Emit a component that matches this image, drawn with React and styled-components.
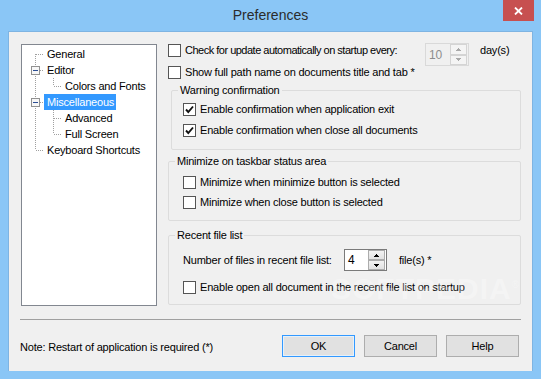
import styled, { createGlobalStyle } from 'styled-components';

const GlobalStyle = createGlobalStyle`
  html, body {
    margin: 0;
    padding: 0;
  }
  body {
    background: #8ac6f6;
    font-family: "Liberation Sans", Arial, sans-serif;
    font-size: 11px;
    letter-spacing: -0.2px;
    color: #000;
  }
  * {
    box-sizing: border-box;
  }
`;

const tree = [
  { label: 'General' },
  { label: 'Editor', children: [{ label: 'Colors and Fonts' }] },
  {
    label: 'Miscellaneous',
    selected: true,
    children: [{ label: 'Advanced' }, { label: 'Full Screen' }],
  },
  { label: 'Keyboard Shortcuts' },
];

function flatten(nodes, level = 0, guides = []) {
  const rows = [];
  nodes.forEach((node, i) => {
    const last = i === nodes.length - 1;
    rows.push({
      label: node.label,
      selected: node.selected,
      level,
      guides,
      first: level === 0 && i === 0,
      last,
      hasChildren: !!node.children,
    });
    if (node.children) {
      rows.push(...flatten(node.children, level + 1, [...guides, !last]));
    }
  });
  return rows;
}

function Guide({ on }) {
  return (
    <svg width="18" height="16" shapeRendering="crispEdges">
      {on && (
        <line x1="9.5" y1="0" x2="9.5" y2="16" stroke="#a0a0a0" strokeDasharray="1 1" />
      )}
    </svg>
  );
}

function Connector({ first, last, hasChildren }) {
  const top = first ? 8 : 0;
  const bottom = last ? 8 : 16;
  return (
    <svg width="18" height="16" shapeRendering="crispEdges">
      <line x1="9.5" y1={top} x2="9.5" y2={bottom} stroke="#a0a0a0" strokeDasharray="1 1" />
      <line x1="10" y1="8.5" x2="18" y2="8.5" stroke="#a0a0a0" strokeDasharray="1 1" />
      {hasChildren && (
        <>
          <rect x="5.5" y="4.5" width="8" height="8" fill="#f7f7f7" stroke="#919191" />
          <line x1="7" y1="8.5" x2="12" y2="8.5" stroke="#2c4e94" />
        </>
      )}
    </svg>
  );
}

function Check({ checked }) {
  return (
    <CheckBox>
      {checked && (
        <svg width="11" height="11" viewBox="0 0 11 11">
          <path d="M2 5.5 L4.3 8 L9 2.5" fill="none" stroke="#111" strokeWidth="1.9" />
        </svg>
      )}
    </CheckBox>
  );
}

function Arrow({ up, color }) {
  return (
    <svg width="5" height="3" viewBox="0 0 5 3" shapeRendering="crispEdges">
      <path d={up ? 'M2.5 0 L5 3 L0 3 Z' : 'M0 0 L5 0 L2.5 3 Z'} fill={color} />
    </svg>
  );
}

function Spinner({ value, disabled, width, height }) {
  const arrow = disabled ? '#a8a8a8' : '#000';
  return (
    <SpinBox $w={width} $h={height} $disabled={disabled}>
      <SpinValue $disabled={disabled}>{value}</SpinValue>
      <SpinButtons>
        <SpinButton $disabled={disabled}>
          <Arrow up color={arrow} />
        </SpinButton>
        <SpinButton $disabled={disabled}>
          <Arrow color={arrow} />
        </SpinButton>
      </SpinButtons>
    </SpinBox>
  );
}

function Option({ checked, children }) {
  return (
    <OptionRow>
      <Check checked={checked} />
      <OptionText>{children}</OptionText>
    </OptionRow>
  );
}

export default function App() {
  const rows = flatten(tree);

  return (
    <>
      <GlobalStyle />
      <Window>
        <TitleBar>
          <span />
          <Title>Preferences</Title>
          <CloseButton>
            <svg width="9" height="8" viewBox="0 0 9 8">
              <path d="M1 0.5 L8 7.5 M8 0.5 L1 7.5" stroke="#fff" strokeWidth="1.8" />
            </svg>
          </CloseButton>
        </TitleBar>
        <Client>
          <Main>
            <TreePanel>
              {rows.map((row) => (
                <TreeRow key={row.label}>
                  {row.guides.map((on, i) => (
                    <Guide key={i} on={on} />
                  ))}
                  <Connector first={row.first} last={row.last} hasChildren={row.hasChildren} />
                  <TreeLabel $selected={row.selected}>{row.label}</TreeLabel>
                </TreeRow>
              ))}
            </TreePanel>

            <Options>
              <TopRow>
                <Check />
                <OptionText $width={240} $tight>
                  Check for update automatically on startup every:
                </OptionText>
                <Spinner value="10" disabled width={44} height={23} />
                <Unit>day(s)</Unit>
              </TopRow>
              <Option>Show full path name on documents title and tab *</Option>

              <Group $indent={3} $gap={5}>
                <Legend>Warning confirmation</Legend>
                <GroupBody $top={6} $bottom={12} $gap={8} $left={11}>
                  <Option checked>Enable confirmation when application exit</Option>
                  <Option checked>Enable confirmation when close all documents</Option>
                </GroupBody>
              </Group>

              <Group $gap={5}>
                <Legend>Minimize on taskbar status area</Legend>
                <GroupBody $top={8} $bottom={11} $gap={7} $left={14}>
                  <Option>Minimize when minimize button is selected</Option>
                  <Option>Minimize when close button is selected</Option>
                </GroupBody>
              </Group>

              <Group $gap={8}>
                <Legend>Recent file list</Legend>
                <GroupBody $top={7} $bottom={10} $gap={10} $left={14}>
                  <CountRow>
                    <OptionText $width={161}>Number of files in recent file list:</OptionText>
                    <Spinner value="4" width={43} height={22} />
                    <Unit>file(s) *</Unit>
                  </CountRow>
                  <Option>Enable open all document in the recent file list on startup</Option>
                </GroupBody>
              </Group>
              <Watermark>SOFTPEDIA<sup>®</sup></Watermark>
            </Options>
          </Main>

          <Separator />

          <Footer>
            <Note>Note: Restart of application is required (*)</Note>
            <Buttons>
              <DialogButton $default>OK</DialogButton>
              <DialogButton>Cancel</DialogButton>
              <DialogButton>Help</DialogButton>
            </Buttons>
          </Footer>
        </Client>
      </Window>
    </>
  );
}

const Window = styled.div`
  width: 541px;
  height: 379px;
  background: #8ac6f6;
  display: flex;
  flex-direction: column;
`;

const TitleBar = styled.div`
  height: 31px;
  display: grid;
  grid-template-columns: 1fr auto 1fr;
  align-items: start;
`;

const Title = styled.div`
  font-size: 14px;
  letter-spacing: 0;
  line-height: 31px;
  color: #2b2b2b;
`;

const CloseButton = styled.div`
  justify-self: end;
  width: 31px;
  height: 21px;
  margin-right: 7px;
  background: #c75050;
  display: flex;
  align-items: center;
  justify-content: center;
`;

const Client = styled.div`
  width: 525px;
  height: 340px;
  margin-left: 8px;
  background: #f0f0f0;
  border: 1px solid #7eb4e2;
  border-bottom: none;
  padding: 0 11px;
  display: flex;
  flex-direction: column;
`;

const Main = styled.div`
  display: flex;
  align-items: flex-start;
  gap: 11px;
  margin-top: 11px;
`;

const TreePanel = styled.div`
  width: 136px;
  height: 262px;
  margin-top: 1px;
  margin-left: 1px;
  background: #fff;
  border: 1px solid #828790;
  padding: 1px 0 0 4px;
`;

const TreeRow = styled.div`
  display: flex;
  align-items: center;
  height: 16px;

  svg {
    flex: none;
  }
`;

const TreeLabel = styled.span`
  line-height: 16px;
  padding: 0 2px 0 3px;
  white-space: nowrap;
  background: ${(p) => (p.$selected ? '#3399ff' : 'transparent')};
  color: ${(p) => (p.$selected ? '#fff' : '#000')};
`;

const Options = styled.div`
  position: relative;
  width: 353px;
  display: flex;
  flex-direction: column;
`;

const TopRow = styled.div`
  display: flex;
  align-items: flex-start;
  height: 23px;

  & > span:first-child {
    margin-top: 1px;
  }
`;

const OptionRow = styled.div`
  display: flex;
  align-items: center;
  height: 13px;
`;

const CheckBox = styled.span`
  flex: none;
  width: 13px;
  height: 13px;
  border: 1px solid #555;
  background: #fff;
  display: flex;
  align-items: center;
  justify-content: center;
  margin-right: 4px;
`;

const OptionText = styled.span`
  flex: none;
  width: ${(p) => (p.$width ? `${p.$width}px` : 'auto')};
  line-height: 13px;
  margin-top: ${(p) => (p.$tight ? '1px' : '0')};
  letter-spacing: ${(p) => (p.$tight ? '-0.5px' : 'inherit')};
  white-space: nowrap;
`;

const Unit = styled.span`
  margin-left: 11px;
  line-height: 13px;
  margin-top: 1px;
`;

const CountRow = styled.div`
  display: flex;
  align-items: center;
  height: 22px;

  ${Unit} {
    margin-left: 12px;
    margin-top: 0;
  }
`;

const SpinBox = styled.div`
  flex: none;
  display: flex;
  width: ${(p) => p.$w}px;
  height: ${(p) => p.$h}px;
  border: 1px solid ${(p) => (p.$disabled ? '#d9d9d9' : '#7a7a7a')};
  background: ${(p) => (p.$disabled ? '#f0f0f0' : '#fff')};
  padding: 0 1px 0 0;
`;

const SpinValue = styled.span`
  flex: 1;
  display: flex;
  align-items: center;
  padding-left: 3px;
  font-size: 12px;
  color: ${(p) => (p.$disabled ? '#8d8d8d' : '#000')};
`;

const SpinButtons = styled.div`
  width: 17px;
  display: flex;
  flex-direction: column;
`;

const SpinButton = styled.div`
  flex: 1;
  display: flex;
  align-items: center;
  justify-content: center;
  border: 1px solid ${(p) => (p.$disabled ? '#d4d4d4' : '#acacac')};
  background: ${(p) => (p.$disabled ? '#f4f4f4' : 'linear-gradient(#f2f2f2, #e2e2e2)')};
`;

const Group = styled.fieldset`
  margin: ${(p) => p.$gap}px 0 0 ${(p) => p.$indent || 0}px;
  padding: 0;
  border: 1px solid #dcdcdc;
  border-radius: 2px;
  min-width: 0;
`;

const Legend = styled.legend`
  margin-left: 6px;
  padding: 0 2px;
  line-height: 13px;
`;

const GroupBody = styled.div`
  display: flex;
  flex-direction: column;
  gap: ${(p) => p.$gap}px;
  padding: ${(p) => p.$top}px 0 ${(p) => p.$bottom}px ${(p) => p.$left}px;
`;

const Watermark = styled.div`
  position: absolute;
  left: 163px;
  top: 229px;
  font-size: 30px;
  font-weight: bold;
  letter-spacing: 1px;
  color: rgba(255, 255, 255, 0.3);
  pointer-events: none;

  sup {
    font-size: 10px;
    font-weight: normal;
  }
`;

const Separator = styled.div`
  height: 1px;
  background: #a0a0a0;
  margin-top: 13px;
`;

const Footer = styled.div`
  display: flex;
  align-items: center;
  justify-content: space-between;
  margin-top: 15px;
  padding-right: 2px;
`;

const Note = styled.span`
  line-height: 13px;
  margin-top: 2px;
`;

const Buttons = styled.div`
  display: flex;
  gap: 9px;
`;

const DialogButton = styled.button`
  width: 73px;
  height: 22px;
  padding: 0;
  font: inherit;
  letter-spacing: inherit;
  color: #000;
  background: #e1e1e1;
  border: 1px solid ${(p) => (p.$default ? '#3399ff' : '#adadad')};
  box-shadow: ${(p) => (p.$default ? 'inset 0 0 0 1px #e5f1fb' : 'none')};
`;
